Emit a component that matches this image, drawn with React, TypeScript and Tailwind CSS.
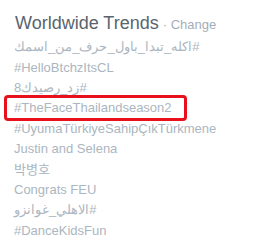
const trends = [
  { label: '#اكله_تبدا_باول_حرف_من_اسمك', rtl: true },
  { label: '#HelloBtchzItsCL' },
  { label: '#زد_رصيدك8', rtl: true },
  { label: '#TheFaceThailandseason2', highlight: true },
  { label: '#UyumaTürkiyeSahipÇıkTürkmene' },
  { label: 'Justin and Selena' },
  { label: '박병호' },
  { label: 'Congrats FEU' },
  { label: '#الاهلي_غوانزو', rtl: true },
  { label: '#DanceKidsFun' },
];

export default function App() {
  return (
    <div
      className="w-[275px] h-[244px] bg-white overflow-hidden pt-[11px]"
      style={{ fontFamily: '"Liberation Sans", Arial, "Noto Sans CJK KR", sans-serif' }}
    >
      <div className="flex items-baseline pl-[15px] h-[24px]">
        <h3 className="text-[18px] text-[#5a646e] leading-[24px]">Worldwide Trends</h3>
        <span className="ml-[4px] text-[13px] text-[#a3aeb8]">
          · <span>Change</span>
        </span>
      </div>
      <ul className="mt-[2px]">
        {trends.map((t) => (
          <li key={t.label} className="h-[20.4px] flex items-center">
            <span
              className={
                'text-[13px] leading-[20px] text-[#abb6c0] ' +
                (t.highlight
                  ? 'border-[3px] border-[#e8101a] rounded-[4px] ml-[4px] pl-[7px] pr-[12px] h-[26px] flex items-center'
                  : 'pl-[14px]')
              }
              dir={t.rtl ? 'rtl' : undefined}
            >
              {t.label}
            </span>
          </li>
        ))}
      </ul>
    </div>
  );
}
